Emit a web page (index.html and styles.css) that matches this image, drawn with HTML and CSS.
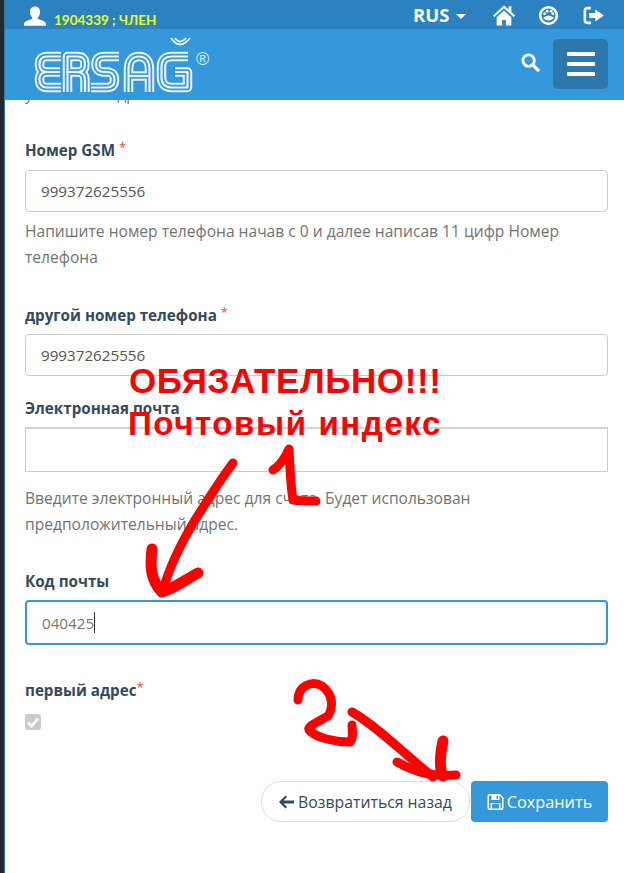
FILE: index.html
```html
<!DOCTYPE html>
<html lang="ru">
<head>
    <meta charset="UTF-8">
    <title>Ersag</title>
    <link rel="stylesheet" href="styles.css">
</head>
<body>
<div class="page">
    <div class="topbar">
        <div class="user">
            <svg class="user-icon" viewBox="0 0 24 21"><path d="M12 0c3.500 0 5.500 2.500 5.500 6 0 2.500-1 5-2.500 6v1.500c3 1.500 9 2 9 6v1.500H0v-1.500c0-4 6-4.500 9-6V12C7.500 11 6.500 8.500 6.500 6 6.500 2.500 8.500 0 12 0z"/></svg>
            <span class="user-text">1904339 ; ЧЛЕН</span>
        </div>
        <div class="top-links">
            <span class="lang">RUS<i class="caret"></i></span>
            <svg class="top-icon home" viewBox="0 0 24 22"><path d="M12 0l5 4.500V1h3v6.300l4 3.700-1.500 1.500L12 3 1.500 12.500 0 11z"/><path d="M4 13l8-7.500 8 7.500v9h-6v-6h-4v6H4z"/></svg>
            <svg class="top-icon dash" viewBox="0 0 24 24"><path fill-rule="evenodd" d="M12 1a11 11 0 1 1 0 22 11 11 0 0 1 0-22zm0 3a8 8 0 0 0-8 8c0 4.500 3.500 8 8 8s8-3.500 8-8a8 8 0 0 0-8-8z"/><path d="M6 14c2 5 10 5 12 0l-6-2z"/><circle cx="7.500" cy="10" r="1.600"/><circle cx="10.500" cy="7" r="1.600"/><circle cx="15" cy="7" r="1.600"/><circle cx="17" cy="10" r="1.600"/></svg>
            <svg class="top-icon signout" viewBox="0 0 24 22"><path d="M9 1v3H5c-1 0-1.500.5-1.500 1.500v11c0 1 .5 1.500 1.500 1.500h4v3H5c-3 0-4.500-2-4.500-4.500v-11C.5 3 2 1 5 1z"/><path d="M14 4l10 7-10 7v-4H7V8h7z"/></svg>
        </div>
    </div>
    <header class="navbar">
        <svg class="logo" viewBox="30 36 190 60" role="img" aria-label="ERSAĞ">
            <defs>
                <g id="logo-lines">
                    <path d="M61 56.500H47Q39.500 56.500 39.500 64.500Q39.500 72 47 72H60"/>
                    <path d="M47 72Q39.500 72 39.500 79.500Q39.500 87.500 47 87.500H61"/>
                    <path d="M67.500 92V56.500H78Q85 56.500 85 64Q85 72 78 72H67.500"/>
                    <path d="M77 72Q85 72 85 80V92"/>
                    <path d="M119 56.500H104Q96 56.500 96 64Q96 72 104 72H107Q114.500 72 114.500 80Q114.500 87.500 107 87.500H91"/>
                    <path d="M128.500 76H149.500"/>
                    <path d="M128.500 92V70Q128.500 56.500 139 56.500Q149.500 56.500 149.500 70V92"/>
                    <path d="M188 56.500H172Q161.500 56.500 161.500 67V77Q161.500 87.500 172 87.500H187.500V72H175"/>
                </g>
            </defs>
            <use href="#logo-lines" class="logo-a"/>
            <use href="#logo-lines" class="logo-b"/>
            <use href="#logo-lines" class="logo-c"/>
            <path class="breve" d="M171 38Q180 51 190 38M175 38Q180 45 186 38"/>
            <text class="logo-reg" x="196" y="65">®</text>
        </svg>
        <div class="nav-right">
            <svg class="search-icon" viewBox="0 0 20 20"><circle cx="8" cy="8" r="6" fill="none" stroke="#fff" stroke-width="3"/><path d="M12.500 12.500L18 18" stroke="#fff" stroke-width="3.400" stroke-linecap="round"/></svg>
            <button class="menu-btn"><i></i><i></i><i></i></button>
        </div>
    </header>

    <main class="content">
        <p class="cut-line"><span>указанный адрес</span></p>
        <div class="field field-first">
            <label class="label">Номер GSM <span class="req">*</span></label>
            <input class="input" type="text" value="999372625556">
            <p class="help">Напишите номер телефона начав с 0 и далее написав 11 цифр Номер телефона</p>
        </div>
        <div class="field field-second">
            <label class="label">другой номер телефона <span class="req">*</span></label>
            <input class="input" type="text" value="999372625556">
        </div>
        <div class="field field-mail">
            <label class="label">Электронная почта</label>
            <input class="input input-square" type="text">
            <p class="help">Введите электронный адрес для счета. Будет использован предположительный адрес.</p>
        </div>
        <div class="field field-zip">
            <label class="label">Код почты</label>
            <div class="input input-focus">040425<i class="cursor"></i></div>
        </div>
        <div class="field field-check">
            <label class="label">первый адрес<span class="req">*</span></label>
            <span class="check">
                <svg viewBox="0 0 16 16"><path d="M3 8.500l3.500 3.500L13 4.500" fill="none" stroke="#fff" stroke-width="2.600"/></svg>
            </span>
        </div>
        <div class="actions">
            <button class="btn btn-back">
                <svg class="btn-icon" viewBox="0 0 16 14"><path d="M7 0l1.600 1.600L4.800 5.400H16v3.200H4.800l3.800 3.800L7 14 0 7z" fill="#34495e"/></svg>Возвратиться назад
            </button>
            <button class="btn btn-save">
                <svg class="btn-icon btn-icon-save" viewBox="0 0 16 16"><path fill="#fff" fill-rule="evenodd" d="M2 0h10.500L16 3.500V14a2 2 0 0 1-2 2H2a2 2 0 0 1-2-2V2a2 2 0 0 1 2-2zm.500 1.500a1 1 0 0 0-1 1v11a1 1 0 0 0 1 1H3V9h10v5.500h.500a1 1 0 0 0 1-1V4.200L12 1.600V6H4V1.500zM4.500 10v4.500h7V10zM9 2v3h1.500V2z"/></svg>Сохранить
            </button>
        </div>
    </main>

    <!-- red marker notes on top of the form -->
    <div class="note note-1">ОБЯЗАТЕЛЬНО!!!</div>
    <div class="note note-2">Почтовый индекс</div>
    <svg class="scribble" viewBox="0 0 624 873">
        <path d="M233 463C215 487 205 505 195 520C180 545 170 565 163 590"/>
        <path class="thick" d="M152 549C150 565 150 580 162 592C175 588 185 580 198 573"/>
        <path d="M273 470C279 466 285 458 289 449C290 465 290 482 293 500C300 501 308 501 316 501"/>
        <path d="M298 700C298 686 312 680 322 686C334 695 333 708 328 716C318 722 307 726 309 730C316 738 335 742 350 742C354 738 352 730 352 725"/>
        <path d="M352 712C375 725 400 750 433 777"/>
        <path d="M397 762C415 772 432 777 456 775"/>
        <path class="thick" d="M443 741C440 755 439 768 443 776"/>
    </svg>
</div>
</body>
</html>
```

FILE: styles.css
```css
* {
    box-sizing: border-box;
}
html, body {
    margin: 0;
    padding: 0;
}
body {
    font-family: "Open Sans", "Noto Sans", sans-serif;
    font-size: 15.2px;
    color: #34495e;
    background: #fff;
}
.page {
    position: relative;
    width: 624px;
    height: 873px;
    overflow: hidden;
    border-left: 4px solid #22282b;
    padding-left: 1px;
    background: #2a7da8;
}

/* top line */
.topbar {
    height: 29px;
    background: #2c82c0;
    display: flex;
    justify-content: space-between;
    padding: 0 20px 0 19px;
}
.user {
    display: flex;
    align-items: flex-start;
    padding-top: 6px;
}
.user-icon {
    width: 22px;
    height: 20px;
    fill: #fff;
}
.user-text {
    margin: 5px 0 0 8px;
    color: #e6ff2e;
    font-family: "Lato", sans-serif;
    font-size: 13.5px;
    font-weight: 700;
    line-height: 18px;
}
.top-links {
    display: flex;
    align-items: center;
    height: 31px;
}
.lang {
    color: #fff;
    font-size: 18.5px;
    font-weight: 700;
    width: 80px;
    margin-top: -3px;
}
.caret {
    display: inline-block;
    margin-left: 7px;
    border: 5px solid transparent;
    border-top-color: #fff;
    border-bottom: 0;
    vertical-align: middle;
}
.top-icon {
    fill: #fff;
}
.home {
    width: 22px;
    height: 21px;
}
.dash {
    width: 21px;
    height: 21px;
    margin-left: 23px;
}
.signout {
    width: 21px;
    height: 19px;
    margin-left: 24px;
}

/* logo line */
.navbar {
    height: 71px;
    background: #3498db;
    display: flex;
    justify-content: space-between;
    padding: 7px 16px 0 25px;
}
.logo {
    width: 190px;
    height: 60px;
}
.logo use {
    fill: none;
    stroke-linejoin: round;
}
.logo-a {
    stroke: #eaf5fc;
    stroke-width: 9.500;
}
.logo-b {
    stroke: #3498db;
    stroke-width: 5.400;
}
.logo-c {
    stroke: #eaf5fc;
    stroke-width: 2.200;
}
.breve {
    fill: none;
    stroke: #eaf5fc;
    stroke-width: 1.800;
}
.logo-reg {
    fill: #d8ecf8;
    font-family: "Liberation Sans", sans-serif;
    font-size: 18px;
}
.nav-right {
    display: flex;
    align-items: flex-start;
    padding-top: 3px;
}
.search-icon {
    width: 19px;
    height: 19px;
    margin: 14px 13px 0 0;
}
.menu-btn {
    width: 55px;
    height: 50px;
    background: #2d77ad;
    border: 0;
    border-radius: 5px;
    display: flex;
    flex-direction: column;
    justify-content: center;
    align-items: center;
    gap: 6px;
    padding: 0;
}
.menu-btn i {
    display: block;
    width: 28px;
    height: 4px;
    background: #fff;
    border-radius: 1px;
}

/* form */
.content {
    height: 773px;
    padding: 0 16px 0 20px;
    background: #fff;
}
.cut-line {
    height: 4px;
    margin: 0;
    overflow: hidden;
    color: #737373;
}
.cut-line span {
    display: block;
    margin-top: -16px;
    line-height: 20px;
}
.field-first {
    padding-top: 36px;
}
.field-second {
    padding-top: 35px;
}
.field-mail {
    padding-top: 22px;
}
.field-zip {
    padding-top: 34px;
}
.field-check {
    padding-top: 35px;
}
.label {
    display: block;
    height: 20px;
    font-size: 15.2px;
    font-weight: 700;
    line-height: 20px;
    margin-bottom: 10px;
}
.field-second .label, .field-mail .label, .field-zip .label, .field-check .label {
    margin-bottom: 9px;
}
.req {
    color: #e74c3c;
    font-size: 13px;
    font-weight: 400;
    position: relative;
    top: -4px;
    line-height: 1;
}
.input {
    display: block;
    width: 100%;
    height: 42px;
    border: 1px solid #ccc;
    border-radius: 4px;
    padding: 0 15px;
    font-family: inherit;
    font-size: 15.2px;
    line-height: 40px;
    color: #555;
    background: #fff;
}
.input-square {
    border-radius: 0;
    height: 45px;
    border-top: 2px solid #d4d4d4;
}
.input-focus {
    height: 45px;
    border: 2px solid #3498db;
    color: #777;
    display: flex;
    align-items: center;
}
.cursor {
    width: 1px;
    height: 21px;
    background: #333;
}
.help {
    margin: 6px 0 0;
    font-size: 15.6px;
    line-height: 26px;
    color: #737373;
}
.field-mail .help {
    margin-top: 13px;
}
.check {
    display: flex;
    align-items: center;
    justify-content: center;
    width: 16px;
    height: 16px;
    margin-top: 14px;
    background: #ccc;
    border-radius: 3px;
}
.actions {
    display: flex;
    justify-content: flex-end;
    gap: 1px;
    margin-top: 51px;
}
.btn {
    height: 41px;
    font-family: inherit;
    font-size: 16.3px;
    display: flex;
    align-items: center;
    justify-content: center;
    padding: 0;
}
.btn-icon {
    width: 15px;
    height: 14px;
    margin-right: 4px;
}
.btn-icon-save {
    width: 17px;
    height: 16px;
    margin-right: 3px;
}
.btn-back {
    width: 209px;
    background: #fff;
    color: #34495e;
    border: 1px solid #ddd;
    border-radius: 20px;
    font-size: 15.8px;
}
.btn-save {
    width: 137px;
    background: #3498db;
    color: #fff;
    border: 0;
    border-radius: 4px;
}

/* annotations */
.note {
    position: absolute;
    color: #f00;
    font-family: "Liberation Sans", sans-serif;
    font-weight: 700;
    white-space: nowrap;
    line-height: 40px;
}
.note-1 {
    top: 361px;
    left: 125px;
    font-size: 35px;
    letter-spacing: 0.6px;
}
.note-2 {
    top: 404px;
    left: 124px;
    font-size: 33px;
    letter-spacing: 1.6px;
}
.scribble {
    position: absolute;
    top: 0;
    left: -4px;
    width: 624px;
    height: 873px;
    fill: none;
    stroke: #f00;
    stroke-width: 9;
    stroke-linecap: round;
    stroke-linejoin: round;
    pointer-events: none;
}
.scribble .thick {
    stroke-width: 11;
}
```
